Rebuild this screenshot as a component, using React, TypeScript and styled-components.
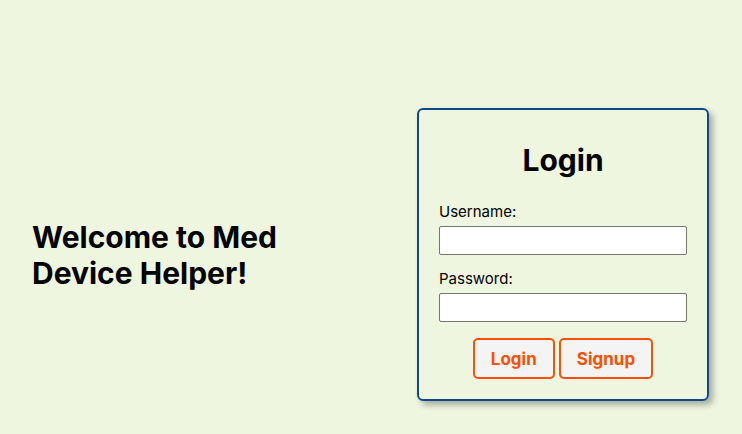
import React from "react";
import styled, { createGlobalStyle } from "styled-components";

const Global = createGlobalStyle`
  html, body { margin: 0; padding: 0; background: #eff6e0; }
  body { font-family: Inter, "Noto Sans", sans-serif; color: #000; }
  * { box-sizing: border-box; }
`;

const Page = styled.div`
  width: 742px;
  height: 434px;
  display: flex;
  align-items: center;
  justify-content: space-between;
  padding: 75px 33px 0 32px;
`;

const Welcome = styled.h1`
  margin: 0;
  width: 290px;
  font-size: 30px;
  line-height: 36px;
  font-weight: 700;
  letter-spacing: 0;
`;

const Card = styled.div`
  width: 292px;
  height: 293px;
  border: 2px solid #0d4a8c;
  border-radius: 6px;
  box-shadow: 4px 4px 6px rgba(0, 0, 0, 0.3);
  padding: 32px 20px 20px;
  display: flex;
  flex-direction: column;
`;

const Title = styled.h2`
  margin: 0 0 24px;
  text-align: center;
  font-size: 30px;
  line-height: 36px;
  font-weight: 700;
`;

const Label = styled.label<{ $top?: number }>`
  display: block;
  font-size: 15px;
  line-height: 20px;
  margin-top: ${(p) => p.$top ?? 0}px;
  margin-bottom: 4px;
`;

const Input = styled.input`
  display: block;
  width: 248px;
  height: 29px;
  border: 1px solid #767676;
  border-radius: 2px;
  background: #fff;
  padding: 2px 4px;
  font-size: 14px;
`;

const Buttons = styled.div`
  display: flex;
  justify-content: center;
  gap: 4px;
  margin-top: 16px;
`;

const Button = styled.button`
  height: 41px;
  padding: 0 16px;
  border: 2px solid #ff4f00;
  border-radius: 5px;
  background: #f4f4f4;
  color: #ff4f00;
  font-family: Inter, "Noto Sans", sans-serif;
  font-size: 17px;
  font-weight: 700;
  cursor: pointer;
`;

export default function App() {
  return (
    <>
      <Global />
      <Page>
        <Welcome>Welcome to Med Device Helper!</Welcome>
        <Card>
          <Title>Login</Title>
          <Label htmlFor="u">Username:</Label>
          <Input id="u" type="text" />
          <Label htmlFor="p" $top={14}>Password:</Label>
          <Input id="p" type="password" />
          <Buttons>
            <Button>Login</Button>
            <Button>Signup</Button>
          </Buttons>
        </Card>
      </Page>
    </>
  );
}
